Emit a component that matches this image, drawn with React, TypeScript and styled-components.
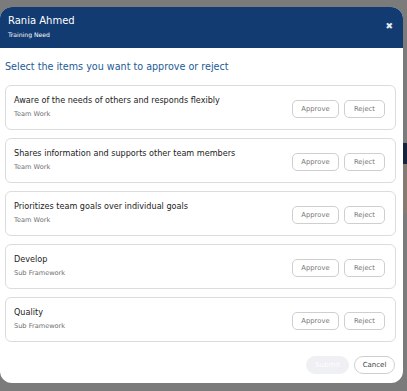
import React from 'react';
import styled, { createGlobalStyle } from 'styled-components';

const GlobalStyle = createGlobalStyle`
  html, body {
    margin: 0;
    padding: 0;
    background: #7b7b7b;
    font-family: 'DejaVu Sans', 'Open Sans', sans-serif;
  }
`;

const Stage = styled.div`
  display: flex;
  width: 407px;
  height: 391px;
  overflow: hidden;
`;

const Modal = styled.div`
  width: 403px;
  height: 376px;
  margin-top: 7px;
  background: #fff;
  border-radius: 12px;
  overflow: hidden;
  display: flex;
  flex-direction: column;
  flex-shrink: 0;
`;

const Behind = styled.div`
  flex: 1;
  display: flex;
  flex-direction: column;
  padding-top: 143px;
`;

const BehindBlock = styled.div<{ $color: string; $h: number }>`
  height: ${(p) => p.$h}px;
  background: ${(p) => p.$color};
`;

const Header = styled.div`
  height: 41px;
  background: #123b72;
  color: #fff;
  display: flex;
  justify-content: space-between;
  align-items: flex-start;
  padding: 7px 10px 0 8px;
  box-sizing: border-box;
`;

const Name = styled.div`
  font-size: 10px;
  line-height: 14px;
`;

const Sub = styled.div`
  font-size: 6.1px;
  line-height: 10px;
  margin-top: 2px;
`;

const Close = styled.div`
  font-size: 9px;
  font-weight: bold;
  line-height: 10px;
  margin-top: 7px;
  color: #e8ecf2;
`;

const Body = styled.div`
  flex: 1;
  padding: 12px 7px 0 5px;
  display: flex;
  flex-direction: column;
`;

const Title = styled.div`
  color: #1d5b96;
  font-size: 9.6px;
  line-height: 14px;
  margin-bottom: 11px;
`;

const List = styled.div`
  display: flex;
  flex-direction: column;
  gap: 8px;
`;

const Card = styled.div`
  height: 45px;
  box-sizing: border-box;
  border: 1px solid #dcdcdc;
  border-radius: 6px;
  display: flex;
  align-items: center;
  justify-content: space-between;
  padding: 0 10px 0 8px;
`;

const Info = styled.div`
  display: flex;
  flex-direction: column;
  gap: 5px;
  margin-top: -2px;
`;

const ItemTitle = styled.div`
  font-size: 8.1px;
  color: #222;
`;

const ItemSub = styled.div`
  font-size: 6.6px;
  color: #6f6f6f;
`;

const Actions = styled.div`
  display: flex;
  gap: 5px;
  margin-top: 2px;
`;

const ActionButton = styled.button<{ $w: number }>`
  width: ${(p) => p.$w}px;
  height: 18px;
  border: 1px solid #cfcfcf;
  border-radius: 5px;
  background: #fff;
  color: #777;
  font-family: inherit;
  font-size: 6.8px;
  padding: 0;
`;

const Footer = styled.div`
  display: flex;
  justify-content: flex-end;
  gap: 5px;
  margin-top: 14px;
  padding-right: 1px;
`;

const PillButton = styled.button<{ $primary?: boolean; $w: number }>`
  width: ${(p) => p.$w}px;
  height: 18px;
  border-radius: 9px;
  padding: 0;
  font-family: inherit;
  font-size: 7px;
  border: 1px solid ${(p) => (p.$primary ? '#eef0f3' : '#cfcfcf')};
  background: ${(p) => (p.$primary ? '#eef0f3' : '#fff')};
  color: ${(p) => (p.$primary ? '#fff' : '#444')};
`;

const items = [
  { title: 'Aware of the needs of others and responds flexibly', sub: 'Team Work' },
  { title: 'Shares information and supports other team members', sub: 'Team Work' },
  { title: 'Prioritizes team goals over individual goals', sub: 'Team Work' },
  { title: 'Develop', sub: 'Sub Framework' },
  { title: 'Quality', sub: 'Sub Framework' },
];

export default function App() {
  return (
    <>
      <GlobalStyle />
      <Stage>
        <Modal>
          <Header>
            <div>
              <Name>Rania Ahmed</Name>
              <Sub>Training Need</Sub>
            </div>
            <Close>✖</Close>
          </Header>
          <Body>
            <Title>Select the items you want to approve or reject</Title>
            <List>
              {items.map((it) => (
                <Card key={it.title}>
                  <Info>
                    <ItemTitle>{it.title}</ItemTitle>
                    <ItemSub>{it.sub}</ItemSub>
                  </Info>
                  <Actions>
                    <ActionButton $w={47}>Approve</ActionButton>
                    <ActionButton $w={41}>Reject</ActionButton>
                  </Actions>
                </Card>
              ))}
            </List>
            <Footer>
              <PillButton $primary $w={43}>Submit</PillButton>
              <PillButton $w={41}>Cancel</PillButton>
            </Footer>
          </Body>
        </Modal>
        <Behind>
          <BehindBlock $color="#16233d" $h={21} />
          <BehindBlock $color="#857b70" $h={50} />
        </Behind>
      </Stage>
    </>
  );
}
